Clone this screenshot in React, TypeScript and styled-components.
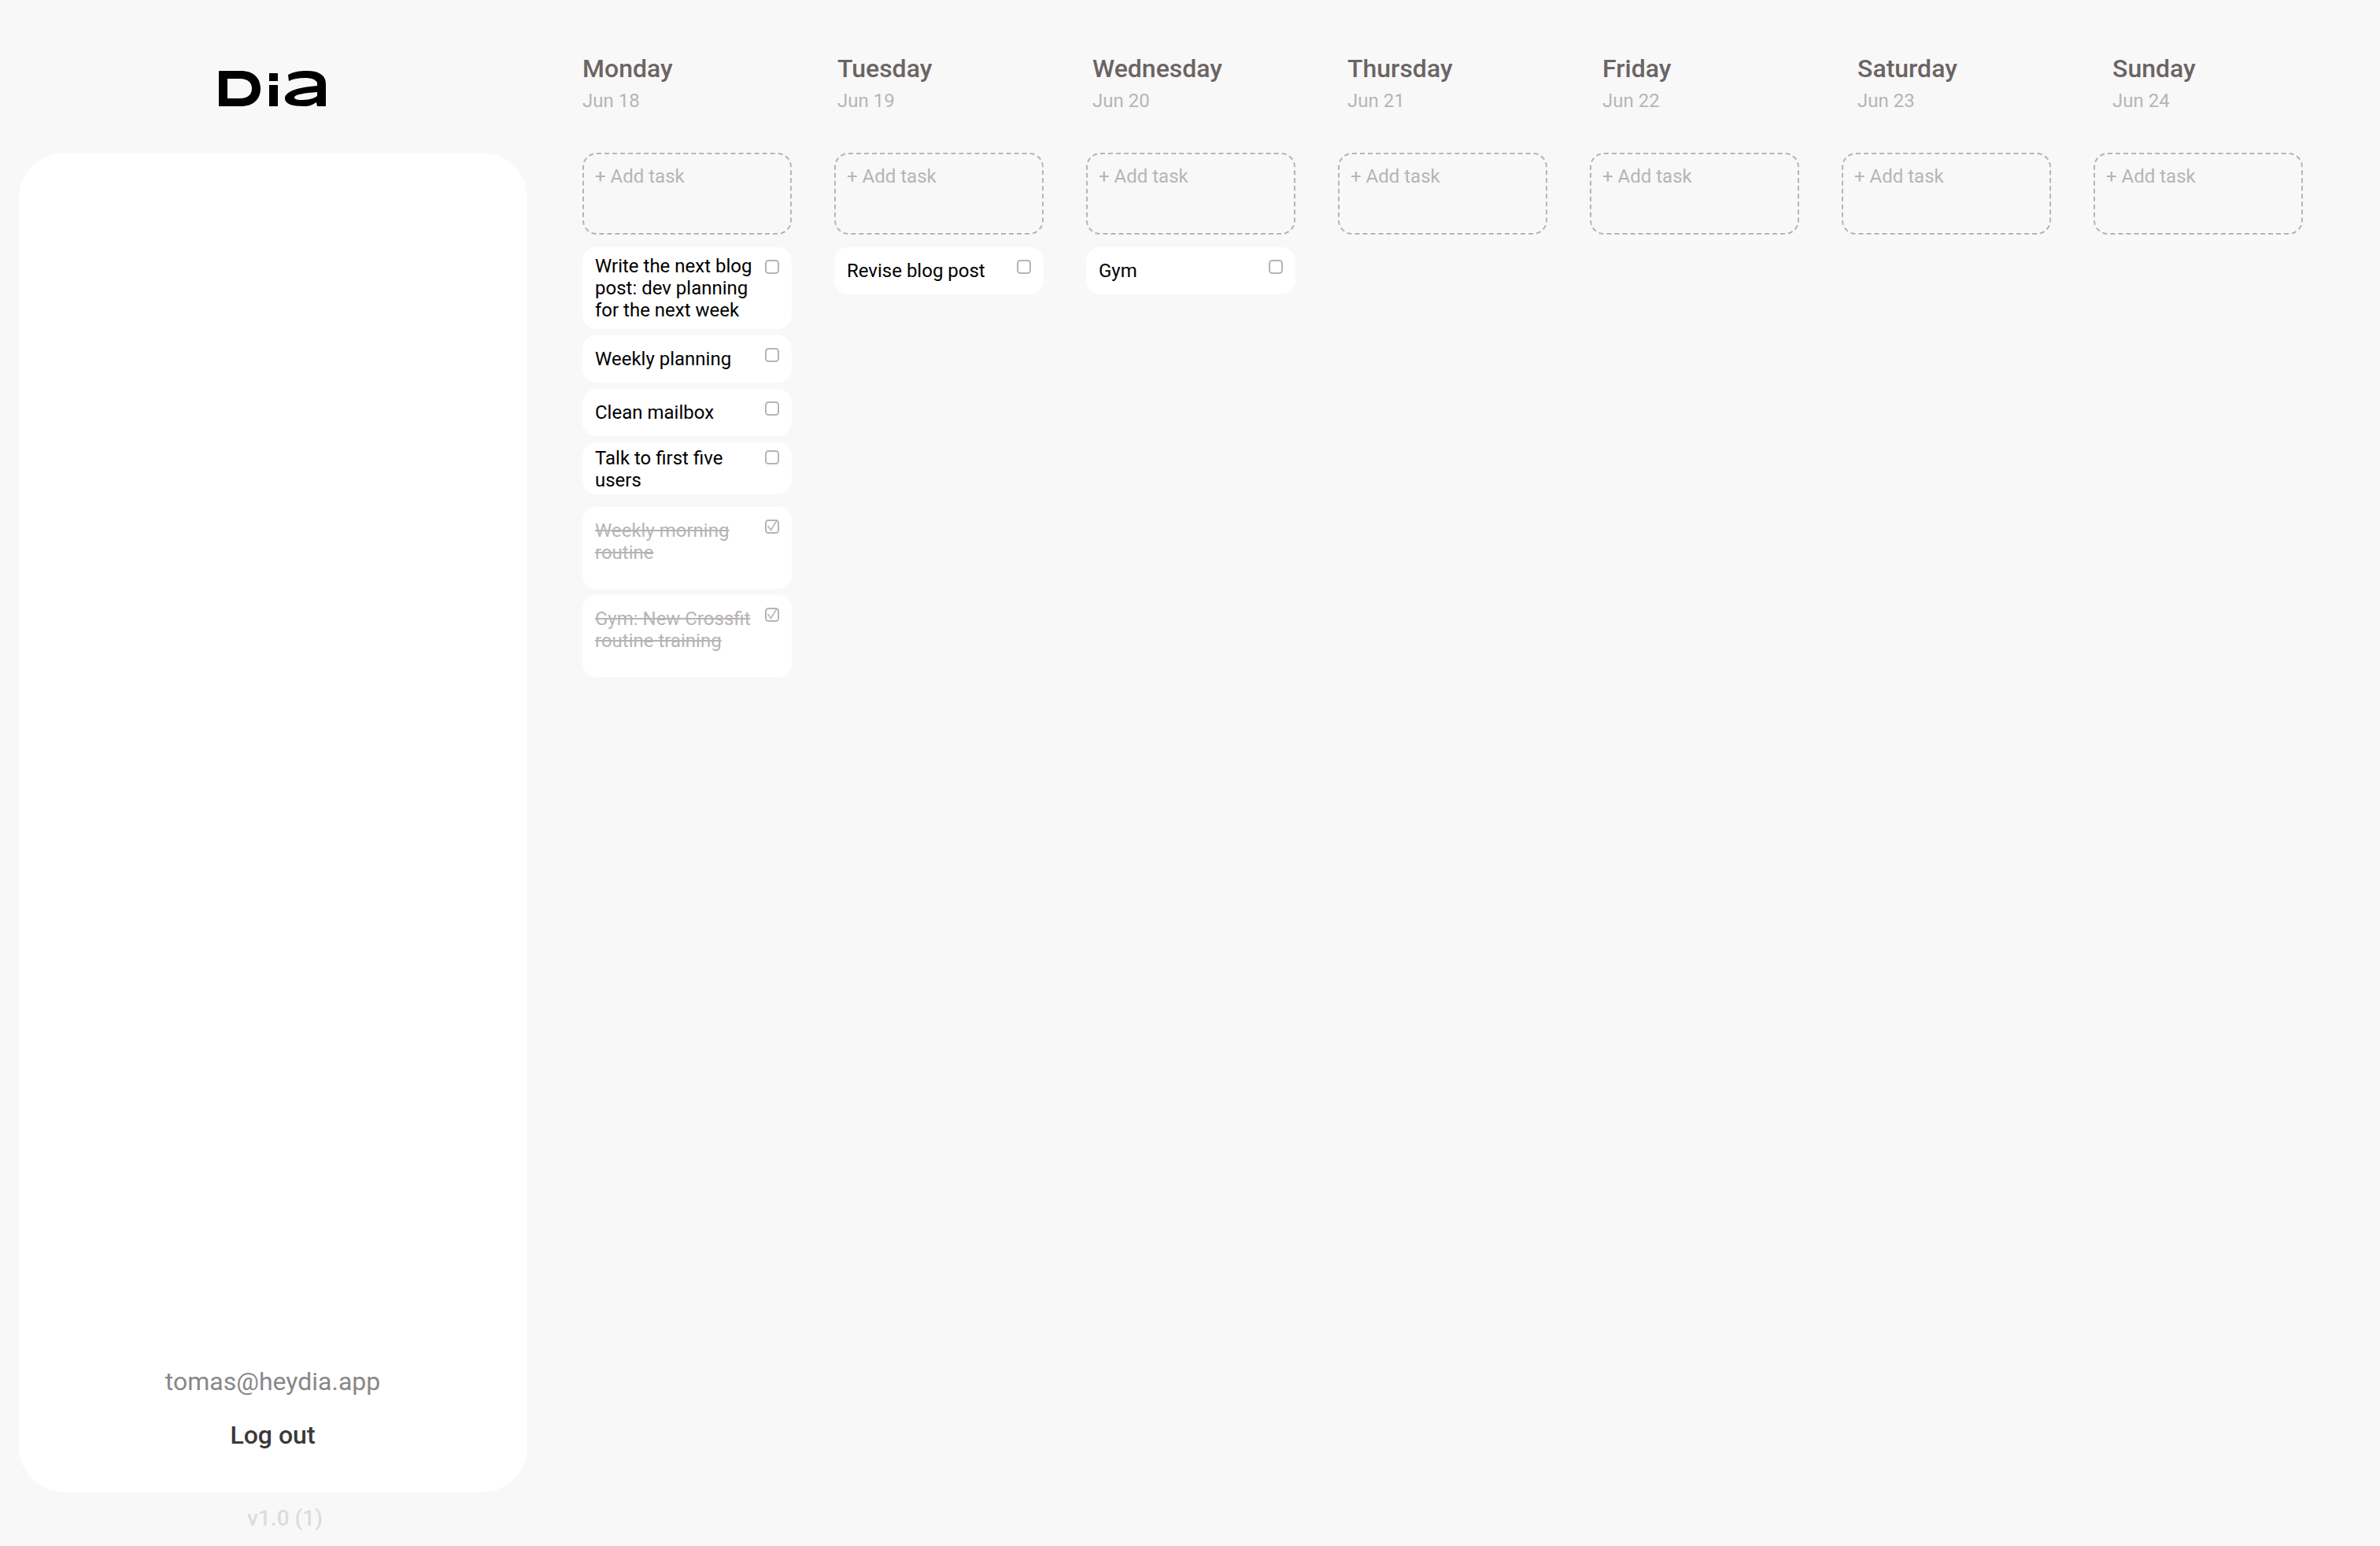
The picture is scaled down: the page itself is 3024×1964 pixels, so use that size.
import styled, { createGlobalStyle } from "styled-components";

const GlobalStyle = createGlobalStyle`
  html, body {
    margin: 0;
    padding: 0;
    background: #f8f8f8;
    font-family: Roboto, "Liberation Sans", sans-serif;
  }
`;

type Task = {
  title: string;
  height: number;
  done?: boolean;
  checkTop?: number;
  padTop?: number;
};

const days: { name: string; date: string; tasks: Task[] }[] = [
  {
    name: "Monday",
    date: "Jun 18",
    tasks: [
      { title: "Write the next blog post: dev planning for the next week", height: 104 },
      { title: "Weekly planning", height: 60 },
      { title: "Clean mailbox", height: 60 },
      { title: "Talk to first five users", height: 66, checkTop: 10, padTop: 2 },
      { title: "Weekly morning routine", height: 104, done: true, padTop: 16 },
      { title: "Gym: New Crossfit routine training", height: 104, done: true, padTop: 16 },
    ],
  },
  { name: "Tuesday", date: "Jun 19", tasks: [{ title: "Revise blog post", height: 60 }] },
  { name: "Wednesday", date: "Jun 20", tasks: [{ title: "Gym", height: 60 }] },
  { name: "Thursday", date: "Jun 21", tasks: [] },
  { name: "Friday", date: "Jun 22", tasks: [] },
  { name: "Saturday", date: "Jun 23", tasks: [] },
  { name: "Sunday", date: "Jun 24", tasks: [] },
];

const Page = styled.div`
  display: flex;
  width: 3024px;
  height: 1964px;
  overflow: hidden;
`;

const Side = styled.aside`
  display: flex;
  flex-direction: column;
  flex: none;
  width: 646px;
  margin-left: 24px;
`;

const LogoRow = styled.div`
  display: flex;
  justify-content: center;
  height: 194px;
  padding-top: 90px;
  padding-right: 2px;
  box-sizing: border-box;
`;

const Panel = styled.div`
  display: flex;
  flex-direction: column;
  align-items: center;
  height: 1702px;
  padding-bottom: 54px;
  padding-right: 1px;
  box-sizing: border-box;
  justify-content: flex-end;
  background: #fff;
  border-radius: 58px;
`;

const Email = styled.div`
  font-size: 32px;
  line-height: 38px;
  font-weight: 400;
  color: #888;
`;

const LogOut = styled.button`
  margin-top: 30px;
  padding: 0;
  border: 0;
  background: none;
  font-family: inherit;
  font-size: 32px;
  line-height: 38px;
  font-weight: 500;
  color: #3a3a3a;
`;

const Version = styled.div`
  margin-top: 16px;
  padding-left: 30px;
  text-align: center;
  font-size: 28px;
  line-height: 34px;
  font-weight: 500;
  color: #dcdcdc;
`;

const Board = styled.main`
  display: flex;
  flex-direction: column;
  margin-left: 70px;
`;

const Headings = styled.div`
  display: grid;
  grid-template-columns: repeat(7, 324px);
  height: 194px;
  padding-top: 68px;
  box-sizing: border-box;
`;

const DayName = styled.div`
  font-size: 32px;
  line-height: 38px;
  font-weight: 500;
  color: #6b6464;
`;

const DayDate = styled.div`
  margin-top: 7px;
  font-size: 24px;
  line-height: 30px;
  color: #b8b4b4;
`;

const Columns = styled.div`
  display: grid;
  grid-template-columns: repeat(7, 266px);
  column-gap: 54px;
`;

const Column = styled.section`
  display: flex;
  flex-direction: column;
`;

const AddTask = styled.div`
  height: 104px;
  margin-bottom: 16px;
  padding: 13px 14px;
  box-sizing: border-box;
  border: 2px dashed #b8b4b4;
  border-radius: 18px;
  font-size: 24px;
  line-height: 30px;
  color: #b8b4b4;
`;

const Card = styled.div<{ $height: number; $padTop: number; $done?: boolean }>`
  position: relative;
  display: flex;
  align-items: ${({ $done }) => ($done ? "flex-start" : "center")};
  height: ${({ $height }) => $height}px;
  margin-bottom: 8px;
  padding: ${({ $padTop }) => $padTop}px 40px 0 16px;
  box-sizing: border-box;
  background: #fff;
  border-radius: 18px;
`;

const CardTitle = styled.div<{ $done?: boolean }>`
  font-size: 24px;
  line-height: 28px;
  color: ${({ $done }) => ($done ? "#b8b4b4" : "#000")};
  text-decoration: ${({ $done }) => ($done ? "line-through" : "none")};
`;

const CheckIcon = styled.svg<{ $top: number }>`
  position: absolute;
  top: ${({ $top }) => $top}px;
  right: 16px;
  width: 18px;
  height: 18px;
`;

const DoneGroup = styled.div`
  margin-top: 8px;
`;

function Logo() {
  return (
    <svg width="136" height="46" viewBox="0 0 136 46" fill="#000">
      <path
        fillRule="evenodd"
        d="M0 0H28C44 0 53 9 53 22.5C53 36 44 45 28 45H0ZM11 10V35H27C37 35 42 30 42 22.5C42 15 37 10 27 10Z"
      />
      <rect x="64" y="3" width="11" height="10" />
      <rect x="64" y="18" width="11" height="27" />
      <path
        fillRule="evenodd"
        d="M88 5C95 1 103 0 112 0C128 0 136 6 136 17V45H125L124 40C118 44 114 45 109 45C93 45 84 42 84 35C84 27 98 21 125 19V15C123 11 118 9 109 9C101 9 95 10 89 13ZM125 27C110 28 96 30 96 34C96 36 100 37 104 37C112 37 120 36 125 32Z"
      />
    </svg>
  );
}

function Check({ done, top = 16 }: { done?: boolean; top?: number }) {
  return (
    <CheckIcon $top={top} viewBox="0 0 18 18" fill="none" stroke="#b8b4b4" strokeWidth="2">
      <rect x="1" y="1" width="16" height="16" rx="3.5" />
      {done && <path d="M3.5 8L7.5 13.5L14.5 2" strokeWidth="1.6" />}
    </CheckIcon>
  );
}

function TaskCard({ task }: { task: Task }) {
  return (
    <Card $height={task.height} $padTop={task.padTop ?? 0} $done={task.done}>
      <CardTitle $done={task.done}>{task.title}</CardTitle>
      <Check done={task.done} top={task.checkTop} />
    </Card>
  );
}

export default function App() {
  return (
    <Page>
      <GlobalStyle />
      <Side>
        <LogoRow>
          <div>
            <Logo />
          </div>
        </LogoRow>
        <Panel>
          <Email>tomas@heydia.app</Email>
          <LogOut>Log out</LogOut>
        </Panel>
        <Version>v1.0 (1)</Version>
      </Side>
      <Board>
        <Headings>
          {days.map((day) => (
            <div key={day.name}>
              <DayName>{day.name}</DayName>
              <DayDate>{day.date}</DayDate>
            </div>
          ))}
        </Headings>
        <Columns>
          {days.map((day) => {
            const open = day.tasks.filter((t) => !t.done);
            const done = day.tasks.filter((t) => t.done);
            return (
              <Column key={day.name}>
                <AddTask>+ Add task</AddTask>
                {open.map((t) => (
                  <TaskCard key={t.title} task={t} />
                ))}
                {done.length > 0 && (
                  <DoneGroup>
                    {done.map((t) => (
                      <TaskCard key={t.title} task={t} />
                    ))}
                  </DoneGroup>
                )}
              </Column>
            );
          })}
        </Columns>
      </Board>
    </Page>
  );
}
